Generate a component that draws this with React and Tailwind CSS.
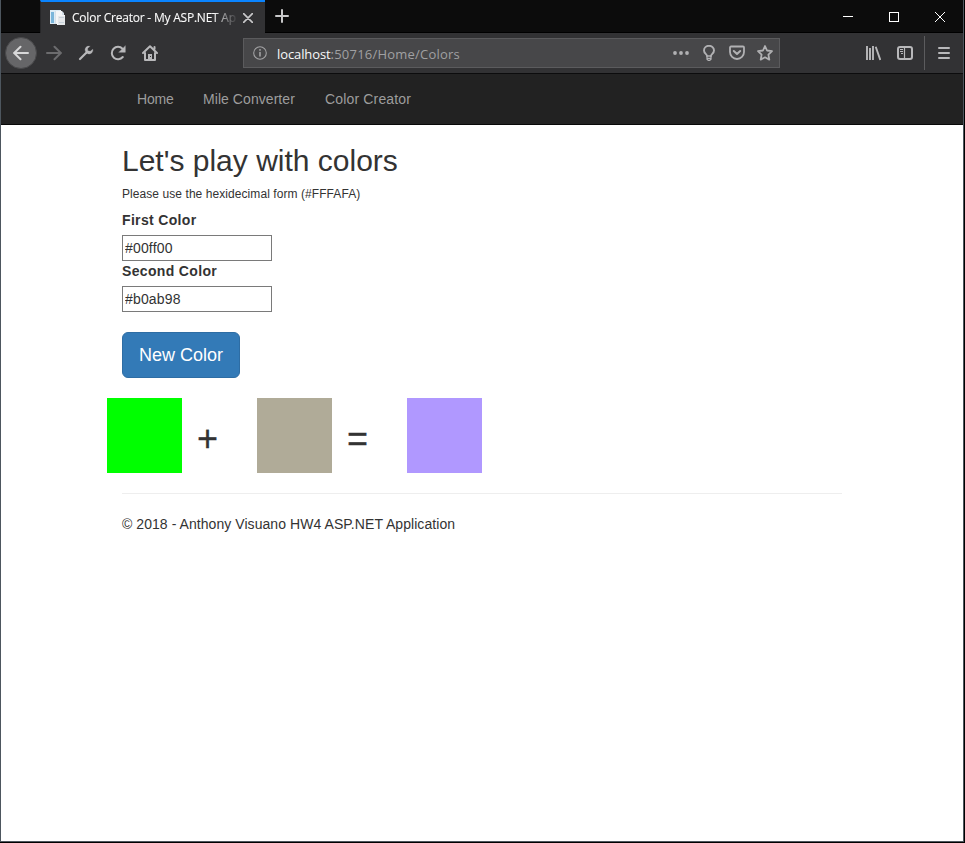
import React from 'react';

function Icon({ children, className = '', size = 16 }) {
  return (
    <svg
      width={size}
      height={size}
      viewBox="0 0 16 16"
      fill="none"
      stroke="currentColor"
      strokeWidth="2"
      strokeLinecap="round"
      strokeLinejoin="round"
      className={`block shrink-0 ${className}`}
    >
      {children}
    </svg>
  );
}

function ToolButton({ children, className = '' }) {
  return <div className={`flex h-8 w-8 shrink-0 items-center justify-center ${className}`}>{children}</div>;
}

function TitleBar() {
  return (
    <div className="flex h-[33px] border-b border-black bg-[#0c0c0c] text-white">
      <div className="-mb-px ml-[39px] flex h-[33px] w-[225px] items-center border-l border-t-2 border-l-[#262628] border-t-[#0a84ff] bg-[#323234] pl-[9px]">
        <svg width="16" height="16" viewBox="0 0 16 16" className="block shrink-0">
          <path d="M0 0h11v2H6v12H0z" fill="#dcebf5" />
          <path d="M1 2h3v11H1z" fill="#7ab5da" />
          <path d="M5 1h7l2 2v11H5z" fill="#d5e0e9" />
          <path d="M6 1h6v4h3v10H7v-1H6z" fill="#f3f5f7" />
          <path d="M8 6h7v9H8z" fill="#e4e7ea" />
          <path d="M9 7.500h5M9 12.500h5" stroke="#c6d1da" />
        </svg>
        <div className="ml-[6px] w-[166px] overflow-hidden whitespace-nowrap bg-gradient-to-r from-white from-85% to-[#4c4c4e] to-98% bg-clip-text font-['Open_Sans',sans-serif] text-[12px] font-medium leading-[18px] tracking-[-0.22px] text-transparent [-webkit-text-stroke:0.2px_transparent]">
          Color Creator - My ASP.NET Ap
        </div>
        <Icon size={10} className="ml-[5px] text-[#c8c8c9]">
          <path d="M1 1l14 14M15 1L1 15" strokeWidth="2.6" />
        </Icon>
      </div>
      <div className="ml-px flex h-8 w-8 items-center justify-center">
        <Icon className="text-[#c8c8c9]">
          <path d="M8 2v12M2 8h12" />
        </Icon>
      </div>
      <div className="ml-auto flex text-white">
        <div className="flex h-8 w-[46px] items-center justify-center">
          <svg width="10" height="10" shapeRendering="crispEdges"><path d="M0 5h10v1H0z" fill="white" /></svg>
        </div>
        <div className="flex h-8 w-[46px] items-center justify-center">
          <div className="mt-[2px] h-[10px] w-[10px] border border-white" />
        </div>
        <div className="flex h-8 w-[46px] items-center justify-center">
          <svg width="10" height="10" className="mt-[2px]" stroke="white" strokeWidth="1"><path d="M0 0l10 10M10 0L0 10" /></svg>
        </div>
      </div>
    </div>
  );
}

function AddressBar() {
  return (
    <div className="ml-[77px] flex h-[30px] w-[537px] items-center border border-[#5b5b5d] bg-[#474749] pl-[9px] text-[#b1b1b3]">
      <Icon size={14} className="text-[#a5a5a7]">
        <circle cx="8" cy="8" r="7.2" strokeWidth="1.2" />
        <path d="M8 7.5v4" strokeWidth="1.8" />
        <path d="M8 4.4v.1" strokeWidth="2" />
      </Icon>
      <div className="ml-[10px] mt-[2px] whitespace-nowrap font-['Open_Sans',sans-serif] text-[13px] leading-5 tracking-[0.22px] text-[#a0a0a2]">
        <span className="tracking-[-0.1px] text-[#f9f9fa]">localhost</span>:50716/Home/Colors
      </div>
      <div className="ml-auto mr-[6px] flex items-center gap-3">
        <Icon>
          <g fill="currentColor" stroke="none">
            <circle cx="2" cy="8" r="1.900" /><circle cx="8" cy="8" r="1.900" /><circle cx="14" cy="8" r="1.900" />
          </g>
        </Icon>
        <Icon>
          <path d="M6 11C6 9 3 8.500 3 5.500a5 4.700 0 0 1 10 0C13 8.500 10 9 10 11" strokeWidth="1.900" />
          <path d="M6 11v3.300l1.200 1h1.600l1.200-1V11M6 11h4M6 13.300h4" strokeWidth="1.300" />
        </Icon>
        <Icon>
          <path d="M2 1.500h12a1 1 0 0 1 1 1V7A7 7 0 0 1 1 7V2.500a1 1 0 0 1 1-1z" strokeWidth="1.800" />
          <path d="M4.800 6L8 9l3.200-3" />
        </Icon>
        <Icon>
          <path d="M8 1l2 4.500 5 .600-3.600 3.500.900 5L8 12.300l-4.300 2.300.900-5L1 6.100l5-.600z" strokeWidth="1.800" />
        </Icon>
      </div>
    </div>
  );
}

function Toolbar() {
  return (
    <div className="flex h-[41px] items-center border-b border-[#0c0c0d] bg-[#323234] pl-1 text-[#b8b8ba]">
      <ToolButton className="rounded-full border border-[#48484a] bg-[#666668] text-[#d8d8d9]">
        <Icon><path d="M15 8H1M7.500 1.800L1.200 8l6.300 6.200" /></Icon>
      </ToolButton>
      <ToolButton className="ml-px text-[#6c6c6e]">
        <Icon><path d="M1 8h14M8.500 1.800L14.800 8l-6.300 6.200" /></Icon>
      </ToolButton>
      <ToolButton>
        <Icon>
          <path d="M2 14l6.500-6.500" strokeWidth="2.200" />
          <path d="M11.800 1.200A3.800 3.800 0 0 0 7.300 6.300L9.700 8.700A3.800 3.800 0 0 0 14.800 4.200L12.300 6.300 9.800 5.800 9.600 3.500z" fill="currentColor" strokeWidth=".3" />
        </Icon>
      </ToolButton>
      <ToolButton>
        <Icon>
          <path d="M12.500 3.800A6.200 6.200 0 1 0 12.800 12" strokeWidth="2" />
          <path d="M15.300 1v6.300H9z" fill="currentColor" strokeWidth=".4" />
        </Icon>
      </ToolButton>
      <ToolButton>
        <Icon>
          <path d="M1 8l7-6.800L15 8" />
          <path d="M3 8v7h10V8" />
          <path d="M6 9h4v6H6z" fill="currentColor" stroke="none" />
          <path d="M8 11h1v1H8z" fill="#323234" stroke="none" />
          <path d="M12.500 2v2" />
        </Icon>
      </ToolButton>
      <AddressBar />
      <div className="ml-auto flex items-center">
        <ToolButton>
          <Icon>
            <path d="M2 1v14M5 3v12M8 1v14M10.700 1.700L15.300 15" strokeLinecap="butt" strokeWidth="1.900" />
          </Icon>
        </ToolButton>
        <ToolButton>
          <Icon>
            <rect x="1" y="2" width="14" height="12" rx="2" />
            <path d="M7.500 2v12" strokeWidth="1.200" />
            <path d="M3 4.500h3M3 6.500h3M4 8.500h2" strokeWidth="1" strokeLinecap="butt" />
          </Icon>
        </ToolButton>
        <div className="ml-[3px] h-[34px] w-px bg-[#5c5c5e]" />
        <ToolButton className="ml-[3px] mr-[3px]">
          <Icon><path d="M3 3h10M3 8h10M3 13h10" /></Icon>
        </ToolButton>
      </div>
    </div>
  );
}

function Field({ label, value }) {
  return (
    <div>
      <label className="mb-[5px] block h-5 font-bold tracking-[0.34px]">{label}</label>
      <input
        defaultValue={value}
        className="block h-[26px] w-[150px] border border-[#7a7a7a] bg-white px-[2px] text-sm tracking-[0.17px] text-[#333333] outline-none"
      />
    </div>
  );
}

function Swatch({ color, operator }) {
  return (
    <div className="flex w-[150px]">
      <div className={`h-[75px] w-[75px] ${color}`} />
      <div className="ml-[15px] mt-[21px] text-[36px] font-medium leading-10 [-webkit-text-stroke:0.3px_#333333]">{operator}</div>
    </div>
  );
}

export default function App() {
  return (
    <div className="h-[843px] w-[965px] overflow-hidden bg-black pb-px pr-px font-['Liberation_Sans',Arial,sans-serif] text-sm text-[#333333]">
      <div className="flex h-[842px] flex-col border-b border-l border-r border-[#4d565e] bg-white">
        <TitleBar />
        <Toolbar />
        <nav className="flex h-[51px] shrink-0 gap-[30px] border-b border-[#080808] bg-[#222222] pl-[136px] pt-[15px] leading-5 text-[#9d9d9d]">
          <a className="w-9 tracking-[-0.2px]">Home</a>
          <a className="w-[92px] whitespace-nowrap tracking-[0.06px]">Mile Converter</a>
          <a className="whitespace-nowrap tracking-[0.16px]">Color Creator</a>
        </nav>
        <main className="ml-[121px] w-[720px] pt-[19px] leading-5">
          <h2 className="text-[30px] font-medium leading-[33px]">Let's play with colors</h2>
          <p className="mt-[7px] h-[26px] text-[12px] tracking-[0.07px]">Please use the hexidecimal form (#FFFAFA)</p>
          <Field label="First Color" value="#00ff00" />
          <Field label="Second Color" value="#b0ab98" />
          <button className="mt-5 block h-[46px] w-[118px] rounded-md border border-[#2e6da4] bg-[#337ab7] text-lg leading-6 text-white">
            New Color
          </button>
          <div className="-ml-[15px] mt-5 flex">
            <Swatch color="bg-[#00ff00]" operator="+" />
            <Swatch color="bg-[#b0ab98]" operator="=" />
            <Swatch color="bg-[#b098ff]" />
          </div>
          <hr className="mt-5 border-t border-[#eeeeee]" />
          <footer className="mt-5 tracking-[0.06px]">© 2018 - Anthony Visuano HW4 ASP.NET Application</footer>
        </main>
      </div>
    </div>
  );
}
